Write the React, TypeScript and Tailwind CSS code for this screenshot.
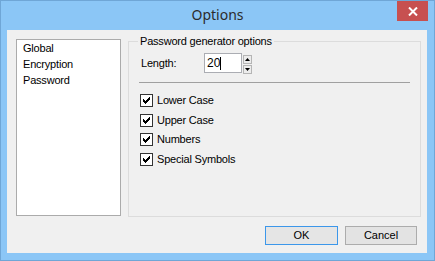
import React from "react";

const body = { fontFamily: '"Liberation Sans", Arial, sans-serif' };

function Check({ label }: { label: string }) {
  return (
    <div className="flex h-[13px] items-center">
      <div className="flex h-[13px] w-[13px] items-center justify-center border border-[#333333] bg-white">
        <svg width="11" height="11" viewBox="0 0 11 11" shapeRendering="crispEdges">
          <path d="M2 4 L4 6 L9 1 L9 4 L4 9 L2 7 Z" fill="#000" />
        </svg>
      </div>
      <span className="ml-[4px] text-[11px] leading-[13px] tracking-[-0.2px] text-black">{label}</span>
    </div>
  );
}

export default function App() {
  return (
    <div
      className="flex h-[261px] w-[435px] flex-col border border-[#6fa6d6] bg-[#8bc6f6]"
      style={body}
    >
      {/* title bar */}
      <div className="grid h-[29px] grid-cols-[1fr_auto_1fr]">
        <div />
        <div
          className="self-center pb-[1px] text-[14px] leading-[18px] text-[#2b2b2b]"
          style={{ fontFamily: '"Noto Sans", "Open Sans", sans-serif' }}
        >
          Options
        </div>
        <div className="flex justify-end">
          <div className="mr-[6px] flex h-[20px] w-[31px] items-center justify-center bg-[#c75050]">
            <svg width="10" height="9" viewBox="0 0 10 9">
              <path d="M1 0.5 L9 8.5 M9 0.5 L1 8.5" stroke="#fff" strokeWidth="2" />
            </svg>
          </div>
        </div>
      </div>

      {/* client */}
      <div className="ml-[6px] flex h-[223px] w-[420px] flex-col bg-[#f0f0f0] pl-[9px] pt-[5px]">
        <div className="flex items-start">
          <div className="mt-[4px] h-[177px] w-[105px] border border-[#ababab] bg-white pl-[6px] text-[11px] leading-[16px] tracking-[-0.2px] text-black">
            <div>Global</div>
            <div>Encryption</div>
            <div>Password</div>
          </div>
          <fieldset className="ml-[7px] h-[182px] w-[293px] border border-[#dcdcdc] pl-[11px] pt-[6px]">
            <legend className="ml-[-2px] px-[2px] text-[11px] leading-[12px] tracking-[-0.2px] text-black">
              Password generator options
            </legend>
            <div className="flex h-[20px] items-center">
              <span className="ml-[1px] w-[63px] text-[11px] tracking-[-0.2px] text-black">Length:</span>
              <div className="flex h-[20px] w-[38px] items-center border border-[#abadb3] bg-white pl-[2px]">
                <span className="text-[12px] leading-[14px] text-black">20</span>
                <span className="h-[13px] w-[1px] bg-black" />
              </div>
              <div className="ml-[1px] flex flex-col gap-[1px] self-start pt-[2px]">
                <div className="flex h-[9px] w-[9px] items-center justify-center border border-[#b5b5b5] bg-[#ececec]">
                  <svg width="5" height="3" viewBox="0 0 5 3">
                    <path d="M2.5 0 L5 3 L0 3 Z" fill="#000" />
                  </svg>
                </div>
                <div className="flex h-[9px] w-[9px] items-center justify-center border border-[#b5b5b5] bg-[#ececec]">
                  <svg width="5" height="3" viewBox="0 0 5 3">
                    <path d="M0 0 L5 0 L2.5 3 Z" fill="#000" />
                  </svg>
                </div>
              </div>
            </div>
            <div className="ml-[-1px] mt-[9px] h-[1px] w-[271px] bg-[#a0a0a0]" />
            <div className="mt-[11px] flex flex-col gap-[6.67px]">
              <Check label="Lower Case" />
              <Check label="Upper Case" />
              <Check label="Numbers" />
              <Check label="Special Symbols" />
            </div>
          </fieldset>
        </div>
        <div className="mr-[10px] mt-[9px] flex justify-end gap-[7px]">
          <button className="h-[19px] w-[73px] border border-[#3c97ea] bg-[#e5e5e5] text-[11px] leading-[17px] text-black">
            OK
          </button>
          <button className="h-[19px] w-[72px] border border-[#acacac] bg-[#e3e3e3] text-[11px] leading-[17px] text-black">
            Cancel
          </button>
        </div>
      </div>
    </div>
  );
}
